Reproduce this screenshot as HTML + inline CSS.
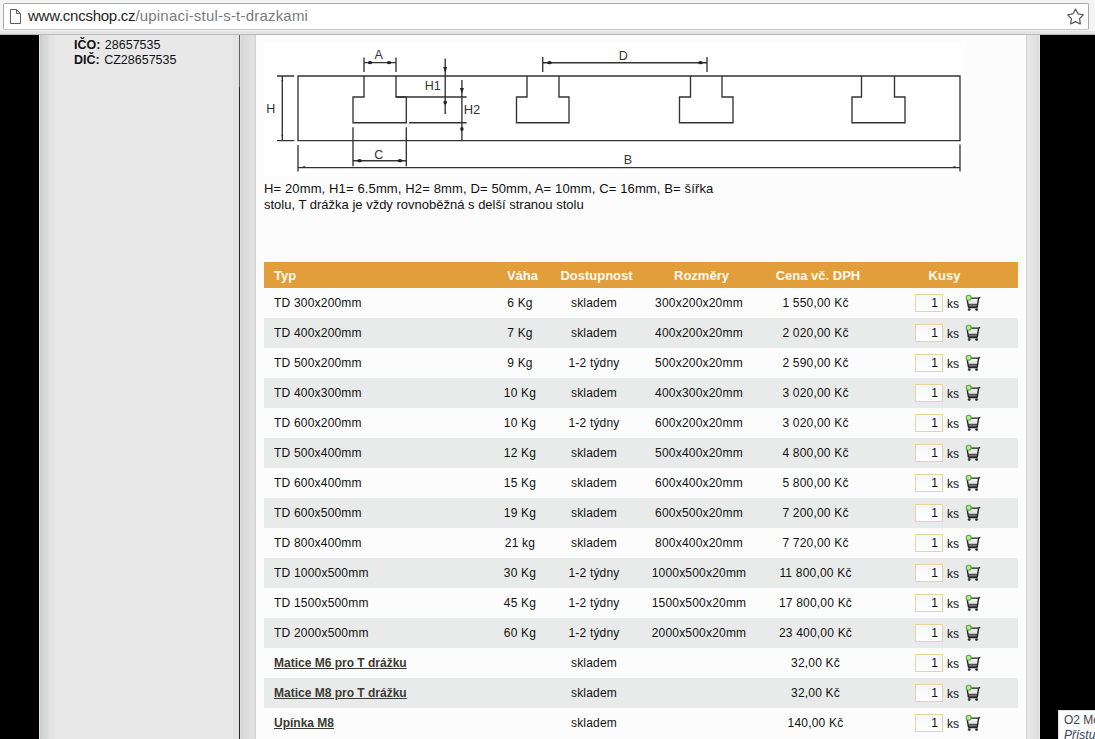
<!DOCTYPE html>
<html><head><meta charset="utf-8">
<style>
html,body{margin:0;padding:0;width:1095px;height:739px;overflow:hidden;background:#000;font-family:"Liberation Sans",sans-serif;}
#chrome{position:absolute;left:0;top:0;width:1095px;height:35px;background:#f4f4f4;}
#chrome .shade{position:absolute;left:0;top:31px;width:1095px;height:3px;background:#e3e3e3;}
#chrome .line{position:absolute;left:0;top:34px;width:1095px;height:1px;background:#b9b9b9;}
#addr{position:absolute;left:3px;top:3px;width:1084px;height:25px;background:#fff;border:1px solid #a9a9a9;border-bottom-color:#c4c4c4;border-radius:2px;}
#url{position:absolute;left:24px;top:3px;font-size:15px;color:#1e1e1e;white-space:nowrap;letter-spacing:-0.25px;}
#url span{color:#7a7a7a;letter-spacing:0.2px;}
#page{position:absolute;left:0;top:35px;width:1095px;height:704px;background:#000;}
#side{position:absolute;left:39px;top:0;width:200px;height:704px;background:#e8e8e8;}
#side .grad{position:absolute;left:0;top:0;width:16px;height:704px;background:linear-gradient(to right,#e6e6e6 0,#e6e6e6 1px,#c9c9c9 1px,#d4d6d5 4px,#dadcdb 9px,#e1e1e1 10px,#e6e6e6 16px);}
#side .band{position:absolute;left:194px;top:0;width:6px;height:704px;background:#e3e3e3;}
#vline{position:absolute;left:239px;top:0;width:1px;height:704px;background:linear-gradient(#5e5e5e 0,#5e5e5e 52px,#262626 53px,#262626 100%);}
#lstrip{position:absolute;left:240px;top:0;width:16px;height:704px;background:linear-gradient(to right,#e2e2e2 0,#d8d8d8 12%,#e3e3e3 85%,#d3d3d3 94%,#d6d6d6 100%);}
#content{position:absolute;left:256px;top:0;width:770px;height:704px;background:#fcfcfc;}
#rstrip{position:absolute;left:1026px;top:0;width:14px;height:704px;background:linear-gradient(to right,#d2d2d2 0,#e8e8e8 15%,#e3e3e3 50%,#dedede 88%,#eaeaea 100%);}
#ico{position:absolute;left:35px;top:3px;font-size:12.5px;line-height:15px;color:#111;word-spacing:1px;}
#ico b{font-weight:bold;}
#desc{position:absolute;left:264px;top:181px;font-size:13px;line-height:16px;color:#111;}
table{position:absolute;left:264px;top:262px;border-collapse:collapse;table-layout:fixed;width:754px;font-size:12px;color:#111;}
th{background:#e19e3b;color:#fffbf0;font-size:13px;font-weight:bold;height:25px;padding:1px 0 0 5px;text-align:center;line-height:25px;}
td{height:30px;padding:0;text-align:center;line-height:30px;letter-spacing:0.2px;}
td a{letter-spacing:0;}
td.k{letter-spacing:0;}
tr.g td{background:#e9ebea;}
td.l,th.l{text-align:left;padding-left:10px;}
a{color:#3b3b33;font-weight:bold;text-decoration:underline;}
td.k{text-align:left;}
.kw{display:flex;align-items:center;height:30px;padding-left:49px;}
.inp{display:block;width:22px;height:16px;border:1px solid #e8d49c;background:linear-gradient(#f4f7fb,#fff);text-align:right;line-height:17px;padding-right:4px;box-sizing:content-box;}
.ks{display:block;margin-left:4px;line-height:17px;padding-top:2px;}
.cart{display:block;margin-left:6px;}
#popup{position:absolute;left:1058px;top:710px;width:60px;height:40px;background:#fbfcfd;border-top:1px solid #ddd;border-left:1px solid #ddd;overflow:hidden;}
#popup .t1{position:absolute;left:5px;top:2px;font-size:12px;color:#444;white-space:nowrap;}
#popup .t2{position:absolute;left:5px;top:17px;font-size:12px;font-style:italic;color:#3a4458;white-space:nowrap;}
</style></head><body>
<div id="chrome">
  <div class="shade"></div><div class="line"></div>
  <div id="addr">
    <svg style="position:absolute;left:6px;top:5px" width="12" height="16" viewBox="0 0 12 16"><path d="M0.5,0.5 H6.5 L10.5,4.5 V14.5 H0.5 Z M6.5,0.5 V4.5 H10.5" fill="#fff" stroke="#5c5c5c" stroke-width="1"/></svg>
    <div id="url">www.cncshop.cz<span>/upinaci-stul-s-t-drazkami</span></div>
    <svg style="position:absolute;left:1062px;top:4px" width="19" height="19" viewBox="0 0 19 19"><path d="M9.50,1.10 L12.03,5.82 L17.30,6.77 L13.59,10.63 L14.32,15.93 L9.50,13.60 L4.68,15.93 L5.41,10.63 L1.70,6.77 L6.97,5.82 Z" fill="#fff" stroke="#555" stroke-width="1.2" stroke-linejoin="round"/></svg>
  </div>
</div>
<div id="page">
  <div id="side"><div class="grad"></div><div class="band"></div>
    <div id="ico"><b>IČO:</b> 28657535<br><b>DIČ:</b> CZ28657535</div>
  </div>
  <div id="vline"></div>
  <div id="lstrip"></div>
  <div id="content"></div>
  <div id="rstrip"></div>
</div>

<svg id="diag" style="position:absolute;left:256px;top:35px" width="770" height="150" viewBox="256 35 770 150">
 <rect x="264" y="42" width="702" height="134" fill="#fff"/>
 <g fill="none" stroke="#333" stroke-width="1.35">
  <path d="M298,76 H960 V140.6 H298 Z M364,76 V97 H353 V122.7 H406.3 V97 H396 V76 M527,76 V97 H516.5 V122.7 H569 V97 H559 V76 M690.5,76 V97 H679.5 V122.7 H733 V97 H722 V76 M861.5,76 V97 H852 V122.7 H905 V97 H894.5 V76"/>
  <path d="M277,76 H294.2 M277,140.6 H294.2 M282.3,76 V140.6"/>
  <path d="M364,57.5 V72 M396,57.5 V72 M364,62.6 H396"/>
  <path d="M445.2,58.5 V114 M396,97 H466.6 M409,122.7 H466.6 M461.9,80 V140.6"/>
  <path d="M353,127.3 V166.2 M406.3,127.3 V166.2 M353,160.7 H406.3"/>
  <path d="M298,145 V171.6 M960,144.6 V171.4 M298,167.6 H960"/>
  <path d="M542.7,57 V72 M707,57 V72 M542.7,62.7 H707"/>
 </g>
 <g fill="#222">
  <ellipse cx="370" cy="62.6" rx="2.3" ry="1.6"/><ellipse cx="389" cy="62.6" rx="2.3" ry="1.6"/>
  <ellipse cx="359.6" cy="160.7" rx="2.3" ry="1.6"/><ellipse cx="400" cy="160.7" rx="2.3" ry="1.6"/>
  <ellipse cx="549.5" cy="62.7" rx="2.3" ry="1.6"/><ellipse cx="700.5" cy="62.7" rx="2.3" ry="1.6"/>
  <path d="M443.2,67 H447.2 L445.2,72.5 Z"/><ellipse cx="445.2" cy="102.5" rx="1.7" ry="2"/>
  <path d="M459.9,88 H463.9 L461.9,93.5 Z"/><ellipse cx="461.9" cy="128.9" rx="1.7" ry="2"/>
  <path d="M281.3,80 H283.3 L282.3,82 Z"/><path d="M281.3,136 H283.3 L282.3,134 Z"/>
  <ellipse cx="304" cy="166.9" rx="1.5" ry="0.7"/><ellipse cx="954.5" cy="166.9" rx="1.5" ry="0.7"/>
 </g>
 <g fill="#333" font-family="Liberation Sans" font-size="12.5">
  <text x="266.3" y="113" textLength="9" lengthAdjust="spacingAndGlyphs">H</text>
  <text x="374.6" y="59.3">A</text>
  <text x="424.8" y="90.4">H1</text>
  <text x="463.8" y="114.2" textLength="16.5" lengthAdjust="spacingAndGlyphs">H2</text>
  <text x="374.2" y="159.2">C</text>
  <text x="623.8" y="164.2">B</text>
  <text x="618.8" y="60.2">D</text>
 </g>
</svg>
<div id="desc"><span style="letter-spacing:0.13px">H= 20mm, H1= 6.5mm, H2= 8mm, D= 50mm, A= 10mm, C= 16mm, B= šířka</span><br>stolu, T drážka je vždy rovnoběžná s delší stranou stolu</div>
<table>
<colgroup><col style="width:221px"><col style="width:70px"><col style="width:78px"><col style="width:132px"><col style="width:101px"><col style="width:152px"></colgroup>
<tr><th class="l">Typ</th><th>Váha</th><th>Dostupnost</th><th>Rozměry</th><th>Cena vč. DPH</th><th>Kusy</th></tr>
<tr><td class="l">TD 300x200mm</td><td>6 Kg</td><td>skladem</td><td>300x200x20mm</td><td>1 550,00 Kč</td><td class="k"><div class="kw"><span class="inp">1</span><span class="ks">ks</span><svg class="cart" width="18" height="18" viewBox="0 0 18 18"><path d="M3,6.6 H13.3 L12.6,9.8 H3.4 Z" fill="#e6e6e6"/><path d="M3.2,9.8 H12.7 L12.2,13.6 H3.6 Z" fill="#505050"/><path d="M3.5,11.7 H12.3" stroke="#8a8a8a" stroke-width="0.8"/><path d="M6,4.1 H13.4 L15.2,3.3 M13.6,4.1 L12.2,13.4 M2.3,6 L3.5,13.4 M3.4,13.5 H12.4" fill="none" stroke="#222" stroke-width="1.4"/><circle cx="4.2" cy="15.6" r="1.45" fill="#333"/><circle cx="11.6" cy="15.6" r="1.45" fill="#333"/><circle cx="3.7" cy="3.8" r="2.5" fill="#b5ec98" stroke="#5ba23a" stroke-width="1.1"/></svg></div></td></tr>
<tr class="g"><td class="l">TD 400x200mm</td><td>7 Kg</td><td>skladem</td><td>400x200x20mm</td><td>2 020,00 Kč</td><td class="k"><div class="kw"><span class="inp">1</span><span class="ks">ks</span><svg class="cart" width="18" height="18" viewBox="0 0 18 18"><path d="M3,6.6 H13.3 L12.6,9.8 H3.4 Z" fill="#e6e6e6"/><path d="M3.2,9.8 H12.7 L12.2,13.6 H3.6 Z" fill="#505050"/><path d="M3.5,11.7 H12.3" stroke="#8a8a8a" stroke-width="0.8"/><path d="M6,4.1 H13.4 L15.2,3.3 M13.6,4.1 L12.2,13.4 M2.3,6 L3.5,13.4 M3.4,13.5 H12.4" fill="none" stroke="#222" stroke-width="1.4"/><circle cx="4.2" cy="15.6" r="1.45" fill="#333"/><circle cx="11.6" cy="15.6" r="1.45" fill="#333"/><circle cx="3.7" cy="3.8" r="2.5" fill="#b5ec98" stroke="#5ba23a" stroke-width="1.1"/></svg></div></td></tr>
<tr><td class="l">TD 500x200mm</td><td>9 Kg</td><td>1-2 týdny</td><td>500x200x20mm</td><td>2 590,00 Kč</td><td class="k"><div class="kw"><span class="inp">1</span><span class="ks">ks</span><svg class="cart" width="18" height="18" viewBox="0 0 18 18"><path d="M3,6.6 H13.3 L12.6,9.8 H3.4 Z" fill="#e6e6e6"/><path d="M3.2,9.8 H12.7 L12.2,13.6 H3.6 Z" fill="#505050"/><path d="M3.5,11.7 H12.3" stroke="#8a8a8a" stroke-width="0.8"/><path d="M6,4.1 H13.4 L15.2,3.3 M13.6,4.1 L12.2,13.4 M2.3,6 L3.5,13.4 M3.4,13.5 H12.4" fill="none" stroke="#222" stroke-width="1.4"/><circle cx="4.2" cy="15.6" r="1.45" fill="#333"/><circle cx="11.6" cy="15.6" r="1.45" fill="#333"/><circle cx="3.7" cy="3.8" r="2.5" fill="#b5ec98" stroke="#5ba23a" stroke-width="1.1"/></svg></div></td></tr>
<tr class="g"><td class="l">TD 400x300mm</td><td>10 Kg</td><td>skladem</td><td>400x300x20mm</td><td>3 020,00 Kč</td><td class="k"><div class="kw"><span class="inp">1</span><span class="ks">ks</span><svg class="cart" width="18" height="18" viewBox="0 0 18 18"><path d="M3,6.6 H13.3 L12.6,9.8 H3.4 Z" fill="#e6e6e6"/><path d="M3.2,9.8 H12.7 L12.2,13.6 H3.6 Z" fill="#505050"/><path d="M3.5,11.7 H12.3" stroke="#8a8a8a" stroke-width="0.8"/><path d="M6,4.1 H13.4 L15.2,3.3 M13.6,4.1 L12.2,13.4 M2.3,6 L3.5,13.4 M3.4,13.5 H12.4" fill="none" stroke="#222" stroke-width="1.4"/><circle cx="4.2" cy="15.6" r="1.45" fill="#333"/><circle cx="11.6" cy="15.6" r="1.45" fill="#333"/><circle cx="3.7" cy="3.8" r="2.5" fill="#b5ec98" stroke="#5ba23a" stroke-width="1.1"/></svg></div></td></tr>
<tr><td class="l">TD 600x200mm</td><td>10 Kg</td><td>1-2 týdny</td><td>600x200x20mm</td><td>3 020,00 Kč</td><td class="k"><div class="kw"><span class="inp">1</span><span class="ks">ks</span><svg class="cart" width="18" height="18" viewBox="0 0 18 18"><path d="M3,6.6 H13.3 L12.6,9.8 H3.4 Z" fill="#e6e6e6"/><path d="M3.2,9.8 H12.7 L12.2,13.6 H3.6 Z" fill="#505050"/><path d="M3.5,11.7 H12.3" stroke="#8a8a8a" stroke-width="0.8"/><path d="M6,4.1 H13.4 L15.2,3.3 M13.6,4.1 L12.2,13.4 M2.3,6 L3.5,13.4 M3.4,13.5 H12.4" fill="none" stroke="#222" stroke-width="1.4"/><circle cx="4.2" cy="15.6" r="1.45" fill="#333"/><circle cx="11.6" cy="15.6" r="1.45" fill="#333"/><circle cx="3.7" cy="3.8" r="2.5" fill="#b5ec98" stroke="#5ba23a" stroke-width="1.1"/></svg></div></td></tr>
<tr class="g"><td class="l">TD 500x400mm</td><td>12 Kg</td><td>skladem</td><td>500x400x20mm</td><td>4 800,00 Kč</td><td class="k"><div class="kw"><span class="inp">1</span><span class="ks">ks</span><svg class="cart" width="18" height="18" viewBox="0 0 18 18"><path d="M3,6.6 H13.3 L12.6,9.8 H3.4 Z" fill="#e6e6e6"/><path d="M3.2,9.8 H12.7 L12.2,13.6 H3.6 Z" fill="#505050"/><path d="M3.5,11.7 H12.3" stroke="#8a8a8a" stroke-width="0.8"/><path d="M6,4.1 H13.4 L15.2,3.3 M13.6,4.1 L12.2,13.4 M2.3,6 L3.5,13.4 M3.4,13.5 H12.4" fill="none" stroke="#222" stroke-width="1.4"/><circle cx="4.2" cy="15.6" r="1.45" fill="#333"/><circle cx="11.6" cy="15.6" r="1.45" fill="#333"/><circle cx="3.7" cy="3.8" r="2.5" fill="#b5ec98" stroke="#5ba23a" stroke-width="1.1"/></svg></div></td></tr>
<tr><td class="l">TD 600x400mm</td><td>15 Kg</td><td>skladem</td><td>600x400x20mm</td><td>5 800,00 Kč</td><td class="k"><div class="kw"><span class="inp">1</span><span class="ks">ks</span><svg class="cart" width="18" height="18" viewBox="0 0 18 18"><path d="M3,6.6 H13.3 L12.6,9.8 H3.4 Z" fill="#e6e6e6"/><path d="M3.2,9.8 H12.7 L12.2,13.6 H3.6 Z" fill="#505050"/><path d="M3.5,11.7 H12.3" stroke="#8a8a8a" stroke-width="0.8"/><path d="M6,4.1 H13.4 L15.2,3.3 M13.6,4.1 L12.2,13.4 M2.3,6 L3.5,13.4 M3.4,13.5 H12.4" fill="none" stroke="#222" stroke-width="1.4"/><circle cx="4.2" cy="15.6" r="1.45" fill="#333"/><circle cx="11.6" cy="15.6" r="1.45" fill="#333"/><circle cx="3.7" cy="3.8" r="2.5" fill="#b5ec98" stroke="#5ba23a" stroke-width="1.1"/></svg></div></td></tr>
<tr class="g"><td class="l">TD 600x500mm</td><td>19 Kg</td><td>skladem</td><td>600x500x20mm</td><td>7 200,00 Kč</td><td class="k"><div class="kw"><span class="inp">1</span><span class="ks">ks</span><svg class="cart" width="18" height="18" viewBox="0 0 18 18"><path d="M3,6.6 H13.3 L12.6,9.8 H3.4 Z" fill="#e6e6e6"/><path d="M3.2,9.8 H12.7 L12.2,13.6 H3.6 Z" fill="#505050"/><path d="M3.5,11.7 H12.3" stroke="#8a8a8a" stroke-width="0.8"/><path d="M6,4.1 H13.4 L15.2,3.3 M13.6,4.1 L12.2,13.4 M2.3,6 L3.5,13.4 M3.4,13.5 H12.4" fill="none" stroke="#222" stroke-width="1.4"/><circle cx="4.2" cy="15.6" r="1.45" fill="#333"/><circle cx="11.6" cy="15.6" r="1.45" fill="#333"/><circle cx="3.7" cy="3.8" r="2.5" fill="#b5ec98" stroke="#5ba23a" stroke-width="1.1"/></svg></div></td></tr>
<tr><td class="l">TD 800x400mm</td><td>21 kg</td><td>skladem</td><td>800x400x20mm</td><td>7 720,00 Kč</td><td class="k"><div class="kw"><span class="inp">1</span><span class="ks">ks</span><svg class="cart" width="18" height="18" viewBox="0 0 18 18"><path d="M3,6.6 H13.3 L12.6,9.8 H3.4 Z" fill="#e6e6e6"/><path d="M3.2,9.8 H12.7 L12.2,13.6 H3.6 Z" fill="#505050"/><path d="M3.5,11.7 H12.3" stroke="#8a8a8a" stroke-width="0.8"/><path d="M6,4.1 H13.4 L15.2,3.3 M13.6,4.1 L12.2,13.4 M2.3,6 L3.5,13.4 M3.4,13.5 H12.4" fill="none" stroke="#222" stroke-width="1.4"/><circle cx="4.2" cy="15.6" r="1.45" fill="#333"/><circle cx="11.6" cy="15.6" r="1.45" fill="#333"/><circle cx="3.7" cy="3.8" r="2.5" fill="#b5ec98" stroke="#5ba23a" stroke-width="1.1"/></svg></div></td></tr>
<tr class="g"><td class="l">TD 1000x500mm</td><td>30 Kg</td><td>1-2 týdny</td><td>1000x500x20mm</td><td>11 800,00 Kč</td><td class="k"><div class="kw"><span class="inp">1</span><span class="ks">ks</span><svg class="cart" width="18" height="18" viewBox="0 0 18 18"><path d="M3,6.6 H13.3 L12.6,9.8 H3.4 Z" fill="#e6e6e6"/><path d="M3.2,9.8 H12.7 L12.2,13.6 H3.6 Z" fill="#505050"/><path d="M3.5,11.7 H12.3" stroke="#8a8a8a" stroke-width="0.8"/><path d="M6,4.1 H13.4 L15.2,3.3 M13.6,4.1 L12.2,13.4 M2.3,6 L3.5,13.4 M3.4,13.5 H12.4" fill="none" stroke="#222" stroke-width="1.4"/><circle cx="4.2" cy="15.6" r="1.45" fill="#333"/><circle cx="11.6" cy="15.6" r="1.45" fill="#333"/><circle cx="3.7" cy="3.8" r="2.5" fill="#b5ec98" stroke="#5ba23a" stroke-width="1.1"/></svg></div></td></tr>
<tr><td class="l">TD 1500x500mm</td><td>45 Kg</td><td>1-2 týdny</td><td>1500x500x20mm</td><td>17 800,00 Kč</td><td class="k"><div class="kw"><span class="inp">1</span><span class="ks">ks</span><svg class="cart" width="18" height="18" viewBox="0 0 18 18"><path d="M3,6.6 H13.3 L12.6,9.8 H3.4 Z" fill="#e6e6e6"/><path d="M3.2,9.8 H12.7 L12.2,13.6 H3.6 Z" fill="#505050"/><path d="M3.5,11.7 H12.3" stroke="#8a8a8a" stroke-width="0.8"/><path d="M6,4.1 H13.4 L15.2,3.3 M13.6,4.1 L12.2,13.4 M2.3,6 L3.5,13.4 M3.4,13.5 H12.4" fill="none" stroke="#222" stroke-width="1.4"/><circle cx="4.2" cy="15.6" r="1.45" fill="#333"/><circle cx="11.6" cy="15.6" r="1.45" fill="#333"/><circle cx="3.7" cy="3.8" r="2.5" fill="#b5ec98" stroke="#5ba23a" stroke-width="1.1"/></svg></div></td></tr>
<tr class="g"><td class="l">TD 2000x500mm</td><td>60 Kg</td><td>1-2 týdny</td><td>2000x500x20mm</td><td>23 400,00 Kč</td><td class="k"><div class="kw"><span class="inp">1</span><span class="ks">ks</span><svg class="cart" width="18" height="18" viewBox="0 0 18 18"><path d="M3,6.6 H13.3 L12.6,9.8 H3.4 Z" fill="#e6e6e6"/><path d="M3.2,9.8 H12.7 L12.2,13.6 H3.6 Z" fill="#505050"/><path d="M3.5,11.7 H12.3" stroke="#8a8a8a" stroke-width="0.8"/><path d="M6,4.1 H13.4 L15.2,3.3 M13.6,4.1 L12.2,13.4 M2.3,6 L3.5,13.4 M3.4,13.5 H12.4" fill="none" stroke="#222" stroke-width="1.4"/><circle cx="4.2" cy="15.6" r="1.45" fill="#333"/><circle cx="11.6" cy="15.6" r="1.45" fill="#333"/><circle cx="3.7" cy="3.8" r="2.5" fill="#b5ec98" stroke="#5ba23a" stroke-width="1.1"/></svg></div></td></tr>
<tr><td class="l"><a>Matice M6 pro T drážku</a></td><td></td><td>skladem</td><td></td><td>32,00 Kč</td><td class="k"><div class="kw"><span class="inp">1</span><span class="ks">ks</span><svg class="cart" width="18" height="18" viewBox="0 0 18 18"><path d="M3,6.6 H13.3 L12.6,9.8 H3.4 Z" fill="#e6e6e6"/><path d="M3.2,9.8 H12.7 L12.2,13.6 H3.6 Z" fill="#505050"/><path d="M3.5,11.7 H12.3" stroke="#8a8a8a" stroke-width="0.8"/><path d="M6,4.1 H13.4 L15.2,3.3 M13.6,4.1 L12.2,13.4 M2.3,6 L3.5,13.4 M3.4,13.5 H12.4" fill="none" stroke="#222" stroke-width="1.4"/><circle cx="4.2" cy="15.6" r="1.45" fill="#333"/><circle cx="11.6" cy="15.6" r="1.45" fill="#333"/><circle cx="3.7" cy="3.8" r="2.5" fill="#b5ec98" stroke="#5ba23a" stroke-width="1.1"/></svg></div></td></tr>
<tr class="g"><td class="l"><a>Matice M8 pro T drážku</a></td><td></td><td>skladem</td><td></td><td>32,00 Kč</td><td class="k"><div class="kw"><span class="inp">1</span><span class="ks">ks</span><svg class="cart" width="18" height="18" viewBox="0 0 18 18"><path d="M3,6.6 H13.3 L12.6,9.8 H3.4 Z" fill="#e6e6e6"/><path d="M3.2,9.8 H12.7 L12.2,13.6 H3.6 Z" fill="#505050"/><path d="M3.5,11.7 H12.3" stroke="#8a8a8a" stroke-width="0.8"/><path d="M6,4.1 H13.4 L15.2,3.3 M13.6,4.1 L12.2,13.4 M2.3,6 L3.5,13.4 M3.4,13.5 H12.4" fill="none" stroke="#222" stroke-width="1.4"/><circle cx="4.2" cy="15.6" r="1.45" fill="#333"/><circle cx="11.6" cy="15.6" r="1.45" fill="#333"/><circle cx="3.7" cy="3.8" r="2.5" fill="#b5ec98" stroke="#5ba23a" stroke-width="1.1"/></svg></div></td></tr>
<tr><td class="l"><a>Upínka M8</a></td><td></td><td>skladem</td><td></td><td>140,00 Kč</td><td class="k"><div class="kw"><span class="inp">1</span><span class="ks">ks</span><svg class="cart" width="18" height="18" viewBox="0 0 18 18"><path d="M3,6.6 H13.3 L12.6,9.8 H3.4 Z" fill="#e6e6e6"/><path d="M3.2,9.8 H12.7 L12.2,13.6 H3.6 Z" fill="#505050"/><path d="M3.5,11.7 H12.3" stroke="#8a8a8a" stroke-width="0.8"/><path d="M6,4.1 H13.4 L15.2,3.3 M13.6,4.1 L12.2,13.4 M2.3,6 L3.5,13.4 M3.4,13.5 H12.4" fill="none" stroke="#222" stroke-width="1.4"/><circle cx="4.2" cy="15.6" r="1.45" fill="#333"/><circle cx="11.6" cy="15.6" r="1.45" fill="#333"/><circle cx="3.7" cy="3.8" r="2.5" fill="#b5ec98" stroke="#5ba23a" stroke-width="1.1"/></svg></div></td></tr>
</table>
<div id="popup"><div class="t1">O2 Mobile</div><div class="t2">Přístup</div></div>
</body></html>
